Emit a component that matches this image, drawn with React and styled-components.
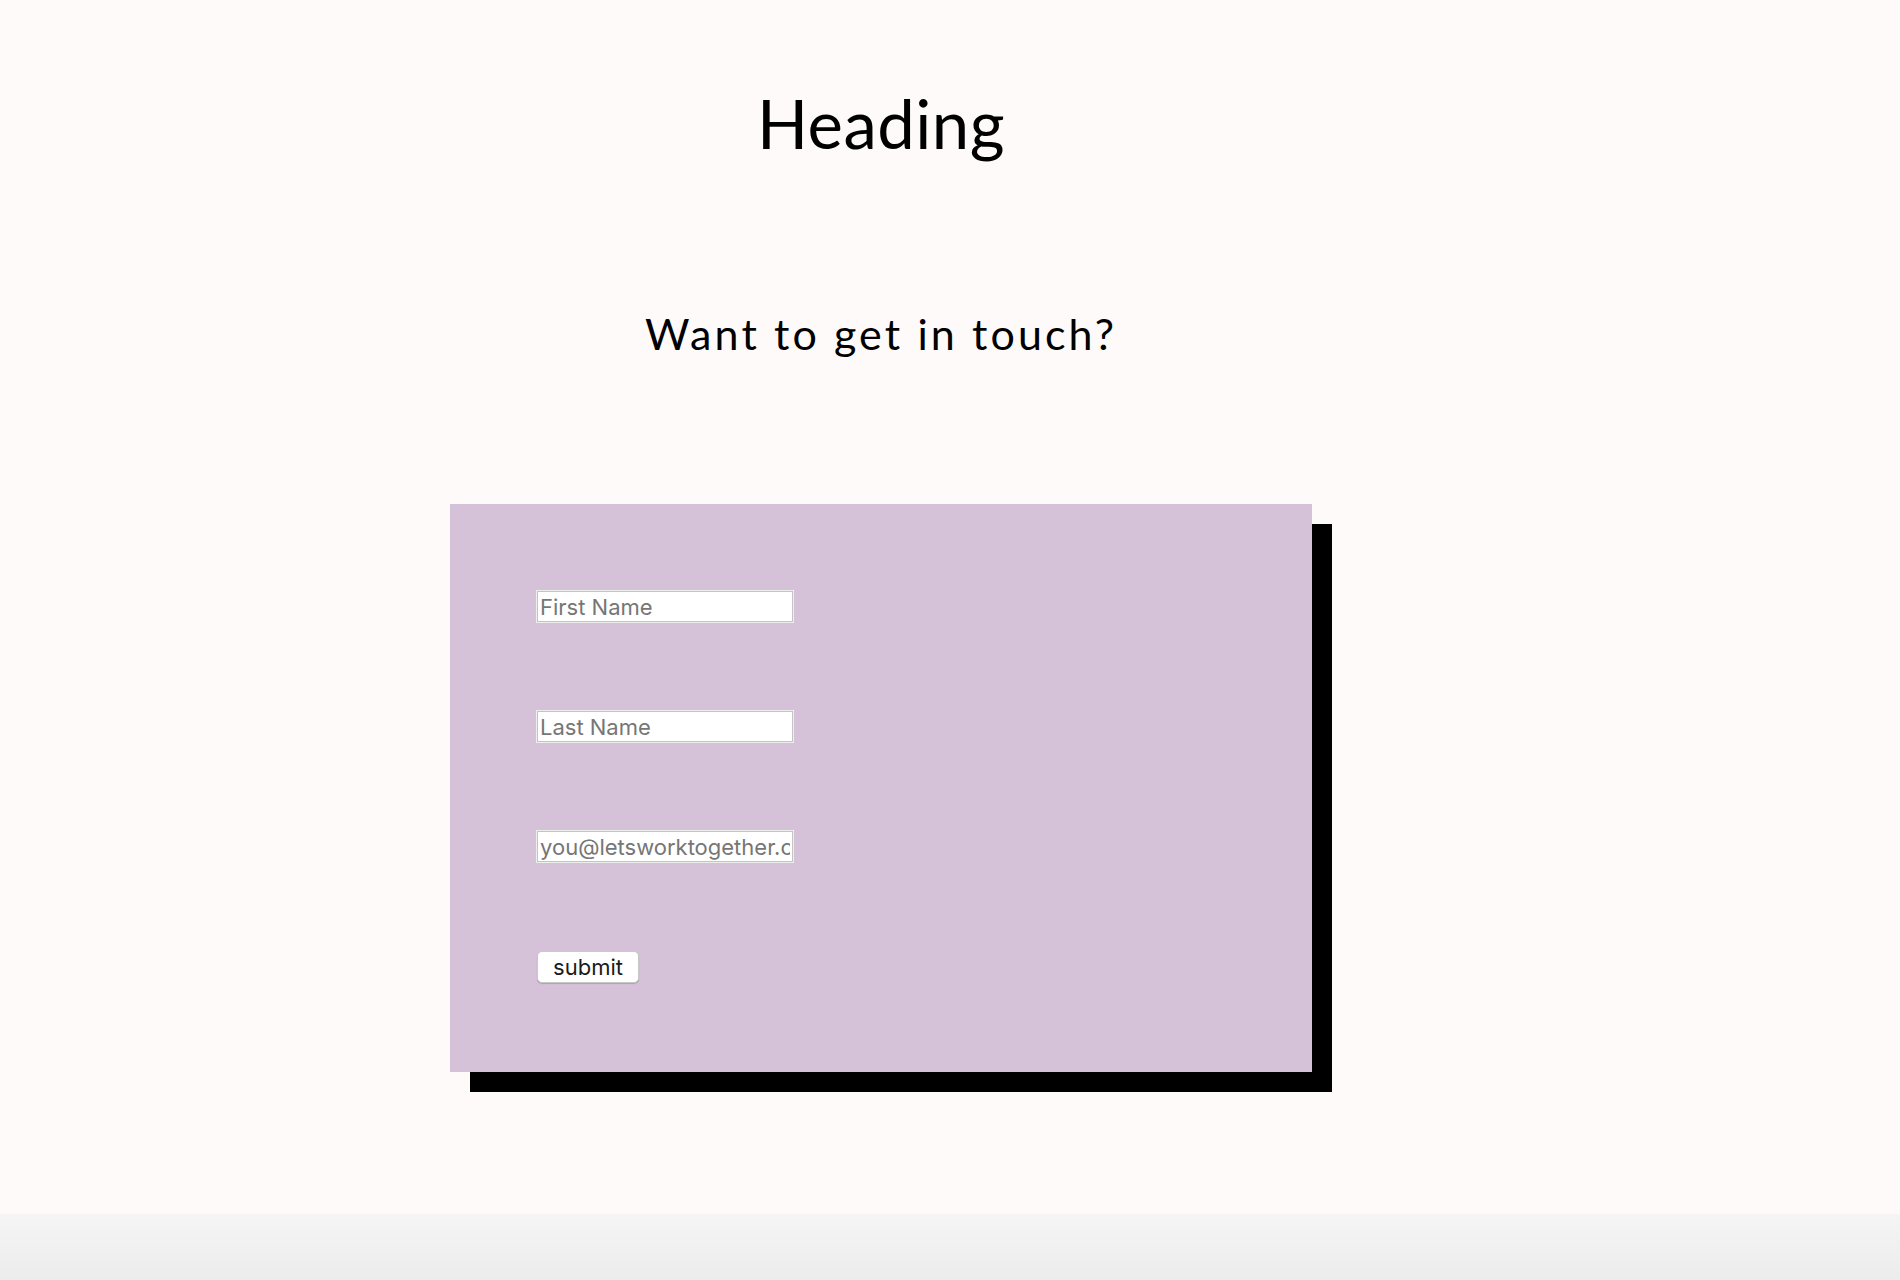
import React from "react";
import styled, { createGlobalStyle } from "styled-components";

const GlobalStyle = createGlobalStyle`
  html, body {
    margin: 0;
    padding: 0;
    background: #fefaf9;
  }
  * {
    box-sizing: border-box;
  }
`;

const App = () => {
  return (
    <Page>
      <GlobalStyle />
      <Main>
        <Heading>Heading</Heading>
        <SubHeading>Want to get in touch?</SubHeading>
        <FormCard onSubmit={(e) => e.preventDefault()}>
          <TextInput type="text" placeholder="First Name" />
          <TextInput type="text" placeholder="Last Name" />
          <TextInput type="email" placeholder="you@letsworktogether.com" />
          <SubmitButton type="submit">submit</SubmitButton>
        </FormCard>
      </Main>
      <Footer />
    </Page>
  );
};

const Page = styled.div`
  display: flex;
  flex-direction: column;
  min-height: 100vh;
  background: #fefaf9;
`;

const Main = styled.main`
  flex: 1;
  display: flex;
  flex-direction: column;
  align-items: center;
  padding: 90px 138px 0 0;
`;

const Heading = styled.h1`
  margin: 0;
  font-family: Lato, "Open Sans", sans-serif;
  font-weight: 400;
  font-size: 67px;
  line-height: 1;
  letter-spacing: 0.5px;
  color: #000;
`;

const SubHeading = styled.h2`
  margin: 155px 0 0;
  font-family: Lato, "Open Sans", sans-serif;
  font-weight: 400;
  font-size: 43px;
  line-height: 1;
  letter-spacing: 3.1px;
  color: #000;
`;

const FormCard = styled.form`
  margin-top: 149px;
  width: 862px;
  display: flex;
  flex-direction: column;
  align-items: flex-start;
  gap: 87px;
  padding: 86px 86px 89px;
  background: #d5c1d8;
  box-shadow: 20px 20px 0 #000;
`;

const TextInput = styled.input`
  width: 258px;
  height: 33px;
  padding: 0 3px;
  border: 1px solid #eeeeee;
  box-shadow: inset 0 0 0 1px #c4c4c4, inset 0 0 0 2px #ffffff;
  background: #fff;
  font-family: Inter, "Liberation Sans", sans-serif;
  font-size: 22px;
  color: #222;
  outline: none;

  &::placeholder {
    color: #767676;
  }
`;

const SubmitButton = styled.button`
  margin-top: 1px;
  margin-left: 1px;
  width: 102px;
  height: 32px;
  padding: 0;
  border: 1px solid #c9c9c9;
  border-radius: 5px;
  background: #fff;
  box-shadow: 0 1px 1px rgba(0, 0, 0, 0.18);
  font-family: Inter, "Liberation Sans", sans-serif;
  font-size: 22px;
  color: #1a1a1a;
  cursor: pointer;
`;

const Footer = styled.footer`
  height: 66px;
  background: linear-gradient(#f5f5f5, #ececec);
`;

export default App;
